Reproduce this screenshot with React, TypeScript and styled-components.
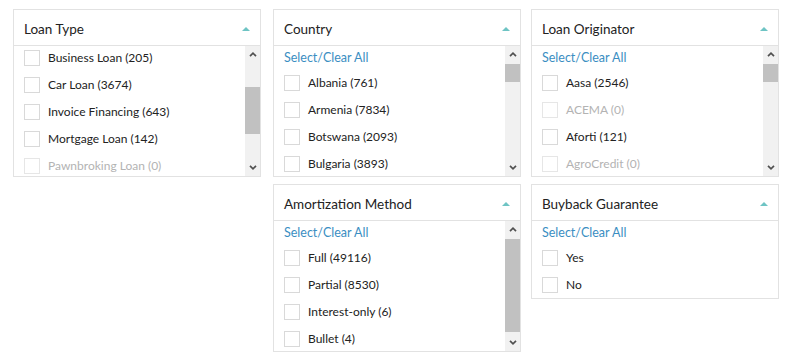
import React from "react";
import styled, { createGlobalStyle } from "styled-components";

const GlobalStyle = createGlobalStyle`
  html, body { margin: 0; padding: 0; background: #ffffff; }
  body { font-family: Lato, "Open Sans", "Liberation Sans", sans-serif; color: #222; }
`;

const Page = styled.div`
  display: grid;
  grid-template-columns: 260px 258px 248px;
  row-gap: 7px;
  padding: 9px 0 0 13px;
  align-items: start;
`;

const Panel = styled.section<{ $col: number; $row: number }>`
  grid-column: ${(p) => p.$col};
  grid-row: ${(p) => p.$row};
  width: 248px;
  border: 1px solid #e2e2e2;
  background: #fff;
  box-sizing: border-box;
`;

const Header = styled.div`
  height: 36px;
  display: flex;
  align-items: center;
  justify-content: space-between;
  padding: 2px 10px 0 10px;
  box-sizing: border-box;
  border-bottom: 1px solid #e2e2e2;
  font-size: 13.5px;
  color: #222;
`;

const Body = styled.div<{ $height?: number }>`
  display: flex;
  ${(p) => (p.$height ? `height: ${p.$height}px;` : "")}
`;

const List = styled.div`
  flex: 1;
  min-width: 0;
  overflow: hidden;
  padding: 4px 10px 5px 10px;
`;

const SelectAll = styled.a`
  display: block;
  font-size: 12.5px;
  line-height: 16px;
  color: #3a8ec2;
  margin-bottom: 9px;
  cursor: pointer;
`;

const Item = styled.label<{ $disabled?: boolean }>`
  display: flex;
  align-items: center;
  gap: 8px;
  height: 16px;
  font-size: 12px;
  line-height: 16px;
  color: ${(p) => (p.$disabled ? "#b3b3b3" : "#222")};
  white-space: nowrap;
  & + & {
    margin-top: 11px;
  }
`;

const Box = styled.span<{ $disabled?: boolean }>`
  width: 16px;
  height: 16px;
  box-sizing: border-box;
  flex: none;
  border: 1px solid ${(p) => (p.$disabled ? "#e6e6e6" : "#d9d9d9")};
  background: #fff;
`;

const Scrollbar = styled.div`
  width: 15px;
  flex: none;
  display: flex;
  flex-direction: column;
  background: #f1f1f1;
`;

const ScrollButton = styled.div`
  height: 17px;
  flex: none;
  display: flex;
  align-items: center;
  justify-content: center;
`;

const Track = styled.div`
  flex: 1;
  display: flex;
  flex-direction: column;
`;

const Thumb = styled.div<{ $top: number; $height: number }>`
  margin-top: ${(p) => p.$top}px;
  height: ${(p) => p.$height}px;
  background: #c1c1c1;
`;

const Caret = () => (
  <svg width="8" height="4" viewBox="0 0 8 4">
    <path d="M0 4 L4 0 L8 4 Z" fill="#6ec4c4" />
  </svg>
);

const Chevron = ({ up }: { up?: boolean }) => (
  <svg width="8" height="5" viewBox="0 0 8 5">
    <path
      d={up ? "M1 4.2 L4 1.2 L7 4.2" : "M1 0.8 L4 3.8 L7 0.8"}
      fill="none"
      stroke="#505050"
      strokeWidth="1.7"
    />
  </svg>
);

type Opt = { label: string; disabled?: boolean };

type PanelProps = {
  title: string;
  col: number;
  row: number;
  selectAll?: boolean;
  options: Opt[];
  scroll?: { top: number; height: number };
};

const FilterPanel = ({ title, col, row, selectAll, options, scroll }: PanelProps) => (
  <Panel $col={col} $row={row}>
    <Header>
      <span>{title}</span>
      <Caret />
    </Header>
    <Body $height={scroll ? 130 : undefined}>
      <List>
        {selectAll && <SelectAll>Select/Clear All</SelectAll>}
        {options.map((o) => (
          <Item key={o.label} $disabled={o.disabled}>
            <Box $disabled={o.disabled} />
            <span>{o.label}</span>
          </Item>
        ))}
      </List>
      {scroll && (
        <Scrollbar>
          <ScrollButton>
            <Chevron up />
          </ScrollButton>
          <Track>
            <Thumb $top={scroll.top} $height={scroll.height} />
          </Track>
          <ScrollButton>
            <Chevron />
          </ScrollButton>
        </Scrollbar>
      )}
    </Body>
  </Panel>
);

export default function App() {
  return (
    <>
      <GlobalStyle />
      <Page>
        <FilterPanel
          title="Loan Type"
          col={1}
          row={1}
          scroll={{ top: 24, height: 47 }}
          options={[
            { label: "Business Loan (205)" },
            { label: "Car Loan (3674)" },
            { label: "Invoice Financing (643)" },
            { label: "Mortgage Loan (142)" },
            { label: "Pawnbroking Loan (0)", disabled: true },
          ]}
        />
        <FilterPanel
          title="Country"
          col={2}
          row={1}
          selectAll
          scroll={{ top: 1, height: 18 }}
          options={[
            { label: "Albania (761)" },
            { label: "Armenia (7834)" },
            { label: "Botswana (2093)" },
            { label: "Bulgaria (3893)" },
          ]}
        />
        <FilterPanel
          title="Loan Originator"
          col={3}
          row={1}
          selectAll
          scroll={{ top: 1, height: 18 }}
          options={[
            { label: "Aasa (2546)" },
            { label: "ACEMA (0)", disabled: true },
            { label: "Aforti (121)" },
            { label: "AgroCredit (0)", disabled: true },
          ]}
        />
        <FilterPanel
          title="Amortization Method"
          col={2}
          row={2}
          selectAll
          scroll={{ top: 1, height: 93 }}
          options={[
            { label: "Full (49116)" },
            { label: "Partial (8530)" },
            { label: "Interest-only (6)" },
            { label: "Bullet (4)" },
          ]}
        />
        <FilterPanel
          title="Buyback Guarantee"
          col={3}
          row={2}
          selectAll
          options={[{ label: "Yes" }, { label: "No" }]}
        />
      </Page>
    </>
  );
}
